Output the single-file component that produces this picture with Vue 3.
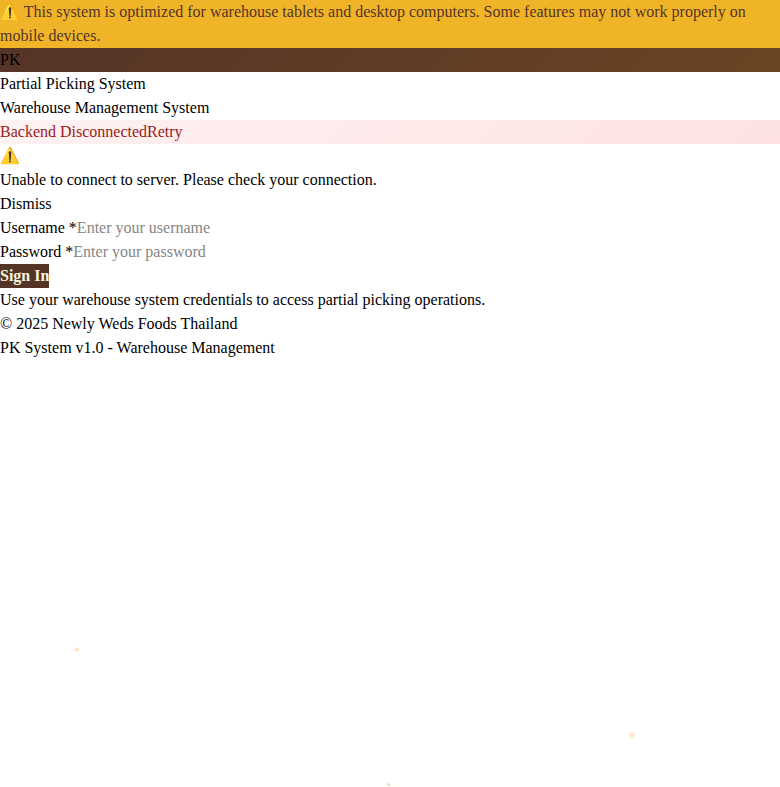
<script setup>
import { ref } from 'vue'

const username = ref('')
const password = ref('')
</script>

<template>
  <div class="page">
    <div class="notice">⚠️ This system is optimized for warehouse tablets and desktop computers. Some features may not work properly on mobile devices.</div>
    <header>
      <div class="brand">PK</div>
      <h1>Partial Picking System</h1>
      <p>Warehouse Management System</p>
    </header>
    <div class="status" role="status"><span>Backend Disconnected</span><button type="button">Retry</button></div>
    <main>
      <div role="alert">
        <div>⚠️</div>
        <p>Unable to connect to server. Please check your connection.</p>
        <button type="button">Dismiss</button>
      </div>
      <form @submit.prevent>
        <div class="field">
          <label for="username">Username *</label>
          <input id="username" v-model="username" type="text" placeholder="Enter your username" />
        </div>
        <div class="field">
          <label for="password">Password *</label>
          <input id="password" v-model="password" type="password" placeholder="Enter your password" />
        </div>
        <button class="submit" type="submit">Sign In</button>
      </form>
      <p>Use your warehouse system credentials to access partial picking operations.</p>
    </main>
    <footer>
      <p>© 2025 Newly Weds Foods Thailand</p>
      <p>PK System v1.0 - Warehouse Management</p>
    </footer>
    <svg class="specks" viewBox="0 0 780 787" preserveAspectRatio="none" aria-hidden="true">
      <circle cx="77" cy="649.5" r="2" opacity="0.35" />
      <circle cx="632" cy="735" r="3" opacity="0.25" />
      <circle cx="388.5" cy="784.5" r="1.5" opacity="0.5" />
    </svg>
  </div>
</template>

<style>
body {
  margin: 0;
  background: #fff;
}
</style>

<style scoped>
.page {
  position: relative;
  min-height: 100vh;
  color: #000;
  font-family: "Liberation Serif", "Times New Roman", serif;
  font-size: 16px;
  line-height: 24px;
}

h1,
p {
  margin: 0;
  font-size: 16px;
  font-weight: 400;
}

button,
input {
  margin: 0;
  padding: 0;
  border: 0;
  border-radius: 0;
  background: transparent;
  color: inherit;
  font: inherit;
}

button {
  display: block;
  cursor: pointer;
}

.notice {
  background: #f0b429;
  color: #553428;
}

.brand {
  background: linear-gradient(135deg, #553428, #6b4423);
}

.status {
  display: flex;
  background: linear-gradient(135deg, #fef2f2, #fee2e2);
  color: #991b1b;
}

.field {
  display: flex;
}

.field input {
  flex: 1;
  min-width: 0;
  height: 24px;
  outline: none;
}

.field input::placeholder {
  color: #858585;
  opacity: 1;
}

.submit {
  background: #553428;
  color: #f5f5dc;
  font-weight: 700;
}

.specks {
  position: absolute;
  inset: 0;
  width: 100%;
  height: 100%;
  fill: #f5b82e;
  pointer-events: none;
}
</style>
